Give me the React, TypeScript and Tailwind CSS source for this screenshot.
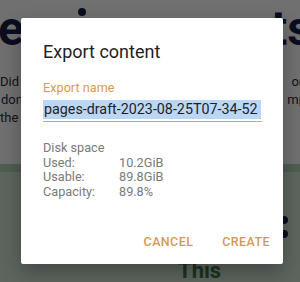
import React from "react";

export default function App() {
  const font = { fontFamily: "Roboto, 'Noto Sans', sans-serif" };
  return (
    <div className="relative w-[300px] h-[282px] overflow-hidden bg-white" style={font}>
      {/* page behind */}
      <div className="flex flex-col h-full">
        <div className="relative h-[179px] bg-white">
          <div className="flex justify-between pt-[5px] text-[48px] leading-[48px] font-bold text-[#1b1f4a]">
            <span className="ml-[-2px]">e</span>
            <span className="mr-[-12px]">ts</span>
          </div>
          <div className="absolute left-[78px] top-[8px] w-[8px] h-[8px] rounded-full bg-[#1b1f4a]" />
          <div className="mt-[20px] flex flex-col text-[13px] leading-[18px] text-[#2a2d4a]">
            <div className="flex justify-between"><span>Did y</span><span className="mr-[-6px]">on</span></div>
            <div className="flex justify-between"><span className="ml-[1px]">don'</span><span className="mr-[-6px]">mp</span></div>
            <div className="flex justify-between"><span>the p</span><span></span></div>
          </div>
        </div>
        <div className="h-[9px] bg-[#b4d4ba]" />
        <div className="flex-1 bg-[#d7e6d8]">
          <div className="flex flex-col items-end gap-[6px] pr-[12px] pt-[44px]">
            <div className="w-[8px] h-[8px] rounded-full bg-[#1b1f4a]" />
            <div className="w-[8px] h-[8px] rounded-full bg-[#1b1f4a]" />
          </div>
          <div className="pl-[178px] mt-[22px] text-[22px] leading-[22px] font-bold text-[#3d7a4e]">This</div>
        </div>
      </div>

      {/* scrim */}
      <div className="absolute inset-0 bg-black/[0.56]" />

      {/* dialog */}
      <div className="absolute left-[21px] top-[18px] w-[262px] h-[246px] bg-white rounded-[2px] shadow-[0_8px_20px_rgba(0,0,0,0.3)] flex flex-col pl-[22px] pr-[13px]">
        <div className="pt-[22px] text-[18px] leading-[24px] text-[#1f1f1f]">Export content</div>
        <div className="mt-[16px] text-[12.7px] leading-[16px] text-[#d79b4f]">Export name</div>
        <div className="mt-[1px] w-[219px] border-b-[1.5px] border-[#d9a460]">
          <span className="bg-[#bcd6f6] text-[14.3px] leading-[19px] inline-block text-[#1f1f1f] pl-[1px] pr-[3px]">pages-draft-2023-08-25T07-34-52</span>
        </div>
        <div className="mt-[19px] text-[12.7px] leading-[14.5px] text-[#7a7a7a] flex flex-col">
          <div>Disk space</div>
          <div className="flex"><span className="w-[76px]">Used:</span><span>10.2GiB</span></div>
          <div className="flex"><span className="w-[76px]">Usable:</span><span>89.8GiB</span></div>
          <div className="flex"><span className="w-[76px]">Capacity:</span><span>89.8%</span></div>
        </div>
        <div className="mt-auto mb-[14px] flex justify-end gap-[29px] text-[12.5px] leading-[16px] font-medium tracking-[0.4px] text-[#d6994f]">
          <span>CANCEL</span>
          <span>CREATE</span>
        </div>
      </div>
    </div>
  );
}
